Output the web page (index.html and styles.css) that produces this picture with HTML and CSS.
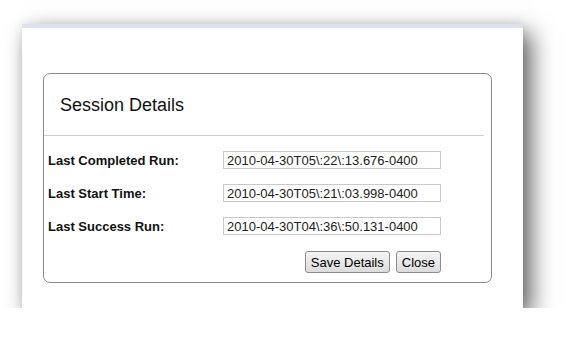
FILE: index.html
```html
<!DOCTYPE html>
<html lang="en">
<head>
  <meta charset="UTF-8">
  <meta name="viewport" content="width=device-width, initial-scale=1.0">
  <title>Session Details</title>
  <link rel="stylesheet" href="styles.css">
</head>
<body>
  <div class="window">
    <section class="panel">
      <header class="panel-header">
        <h2>Session Details</h2>
      </header>

      <form class="details-form">
        <label class="field-label" for="last-completed">Last Completed Run:</label>
        <input type="text" id="last-completed" class="field-input" value="2010-04-30T05\:22\:13.676-0400">

        <label class="field-label" for="last-start">Last Start Time:</label>
        <input type="text" id="last-start" class="field-input" value="2010-04-30T05\:21\:03.998-0400">

        <label class="field-label" for="last-success">Last Success Run:</label>
        <input type="text" id="last-success" class="field-input" value="2010-04-30T04\:36\:50.131-0400">

        <div class="form-actions">
          <button type="button" class="btn">Save Details</button>
          <button type="button" class="btn">Close</button>
        </div>
      </form>
    </section>
  </div>
</body>
</html>
```

FILE: styles.css
```css
/* Base */
:root {
  --text-color: #111111;
  --panel-border: #8a8a8a;
  --rule-color: #cfcfcf;
  --input-border: #c9c9c9;
  --window-top: #dbe3ef;
}

* {
  margin: 0;
  padding: 0;
  box-sizing: border-box;
}

body {
  font-family: 'Liberation Sans', Arial, sans-serif;
  color: var(--text-color);
  background-color: #ffffff;
  padding: 24px 0 0 22px;
}

/* Window */
.window {
  width: 501px;
  height: 284px;
  background-color: #ffffff;
  border-top: 4px solid var(--window-top);
  padding: 45px 0 0 21px;
  box-shadow: 8px 9px 22px rgba(0, 0, 0, 0.62), 0 0 10px rgba(0, 0, 0, 0.07);
}

/* Panel */
.panel {
  width: 449px;
  border: 1px solid var(--panel-border);
  border-radius: 7px;
}

.panel-header {
  margin-right: 7px;
  padding: 20px 16px 19px;
  border-bottom: 1px solid var(--rule-color);
}

.panel-header h2 {
  font-size: 18px;
  font-weight: 400;
  line-height: 22px;
}

/* Form */
.details-form {
  display: grid;
  grid-template-columns: 175px 218px;
  row-gap: 15px;
  align-items: center;
  padding: 15px 0 9px 4px;
}

.field-label {
  font-size: 13px;
  font-weight: 700;
}

.field-input {
  height: 18px;
  padding: 0 3px;
  border: 1px solid var(--input-border);
  font-family: inherit;
  font-size: 13px;
  color: #222222;
  background-color: #ffffff;
}

.form-actions {
  grid-column: 2;
  display: flex;
  justify-content: flex-end;
  gap: 6px;
  margin-top: 1px;
}

.btn {
  height: 22px;
  padding: 0 5px;
  border: 1px solid #8c8c8c;
  border-radius: 3px;
  background: linear-gradient(#f5f5f5, #dcdcdc);
  font-family: inherit;
  font-size: 13px;
  color: #000000;
}
```
